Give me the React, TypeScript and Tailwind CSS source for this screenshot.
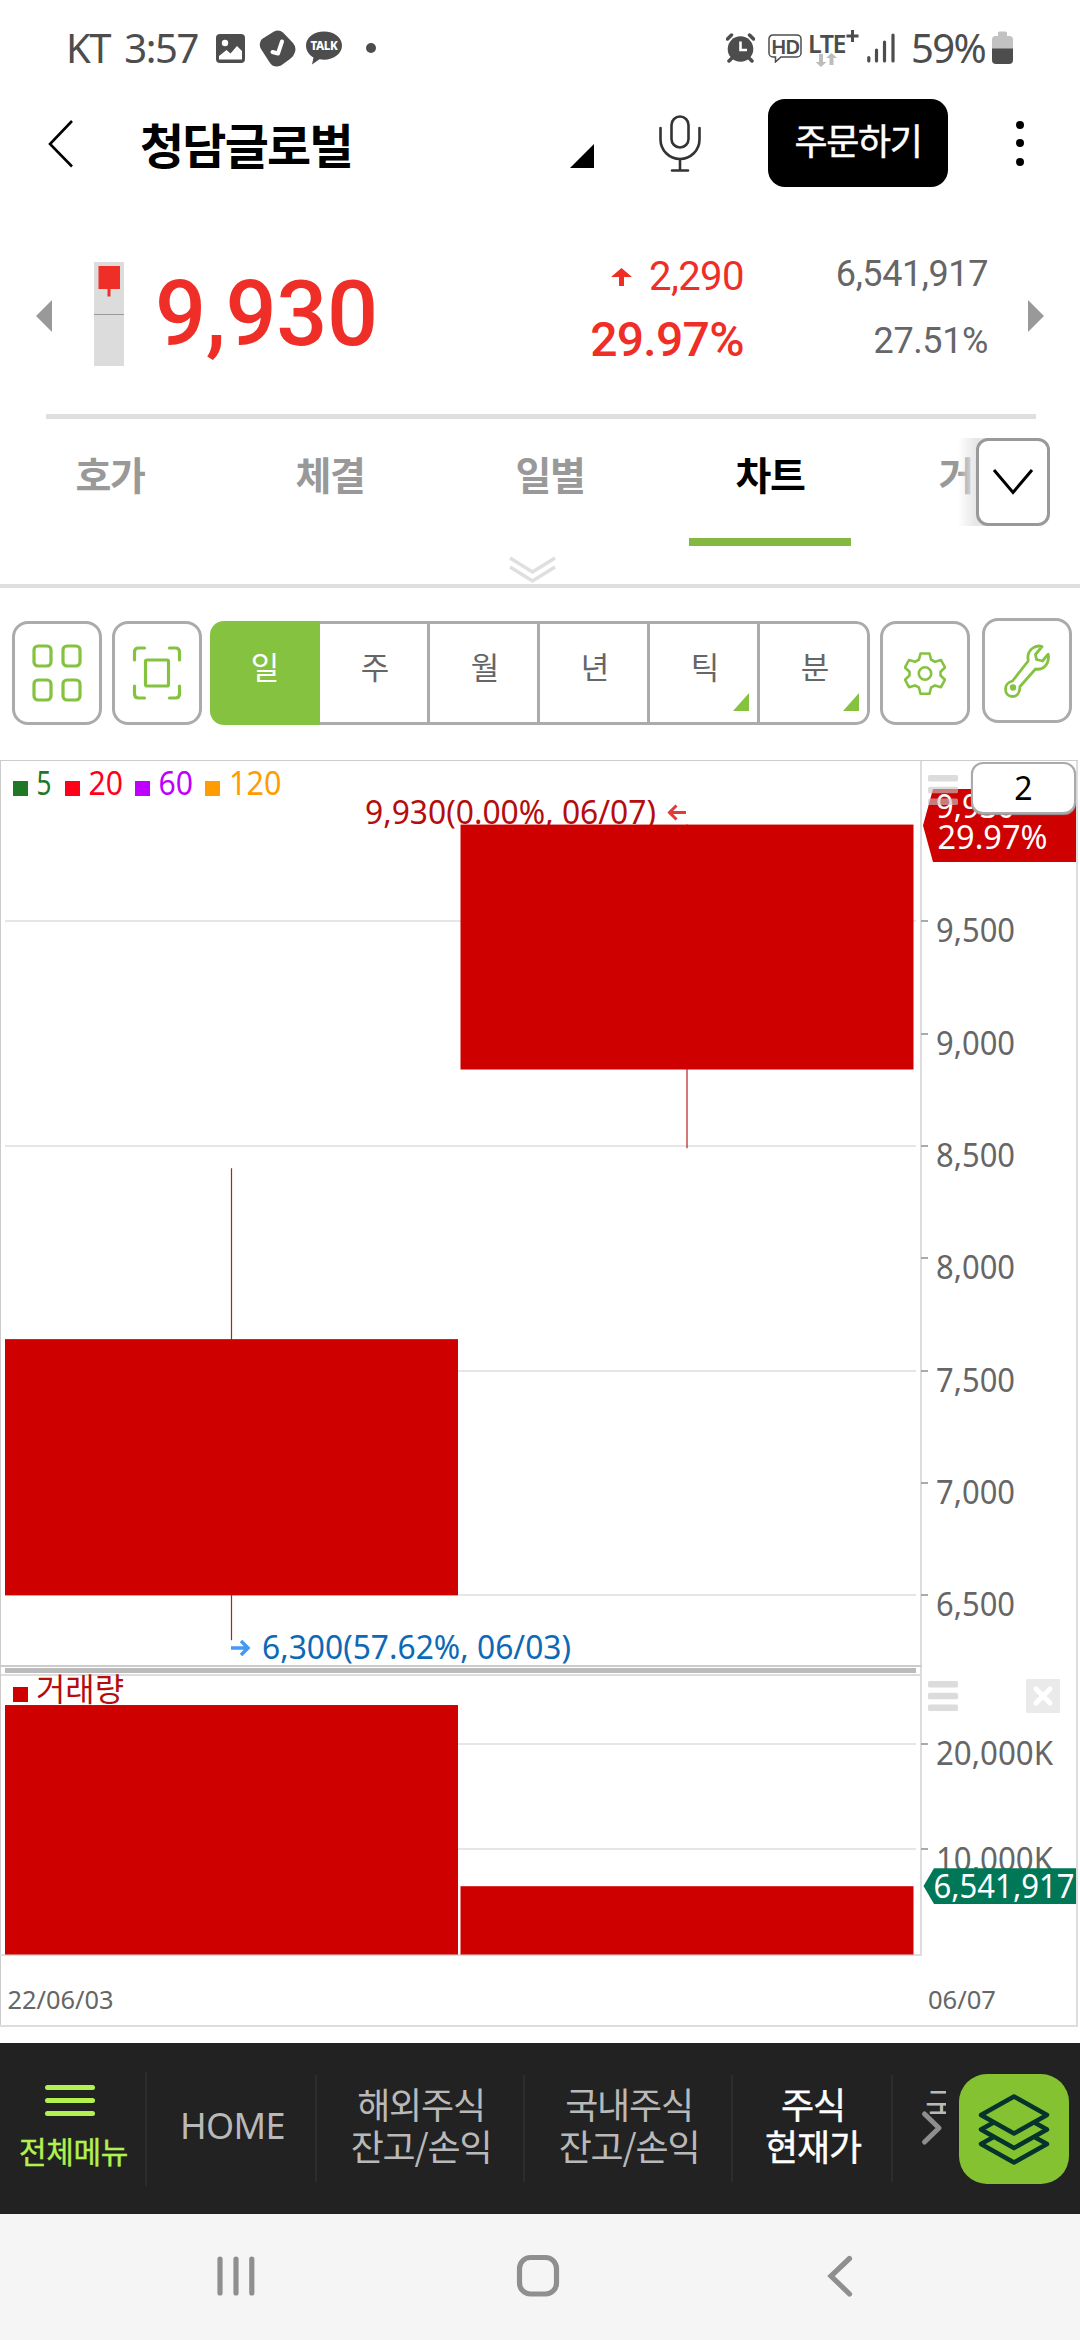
import { ReactNode } from 'react';
import { clsx } from 'clsx';

const FONT = "font-['Noto_Sans','Noto_Sans_CJK_KR',sans-serif]";
const KR = "font-['Noto_Sans_CJK_KR',sans-serif]";
const ROBOTO = "font-['Roboto',sans-serif]";

const tabs = ['호가', '체결', '일별', '차트', '거래원'];

const periods = [
  { label: '일', active: true },
  { label: '주' },
  { label: '월' },
  { label: '년' },
  { label: '틱', more: true },
  { label: '분', more: true },
];

// volume is in thousands
const candles = [
  { x: 5, width: 453, open: 6500, close: 7640, high: 8400, low: 6300, volume: 23690 },
  { x: 460.5, width: 453, open: 8840, close: 9930, high: 9930, low: 8490, volume: 6485 },
];

const movingAverages = [
  { label: '5', color: '#207724', x: 13, textX: 36.5, width: 15 },
  { label: '20', color: '#ff0018', x: 65, textX: 88.5, width: 34.5 },
  { label: '60', color: '#c000ff', x: 135, textX: 158.5, width: 34.5 },
  { label: '120', color: '#ff9d00', x: 205, textX: 229, width: 52.5 },
];

const priceTicks = [9500, 9000, 8500, 8000, 7500, 7000, 6500];
const volumeTicks = [
  { label: '20,000K', value: 20000 },
  { label: '10,000K', value: 10000 },
];

// chart coordinates, origin is the top left of the chart panel
const priceY = (price: number) => 835.3 - (price - 6500) * 0.2247;
const volumeY = (volume: number) => 1194.5 - volume * 0.01053;

const StatusBar = () => (
  <div className="flex h-[96px] items-center pl-[66px] pr-[67px] text-[40px] leading-none text-[#4d4d4d]">
    <span className="w-[148px] whitespace-nowrap tracking-[-1.4px] [word-spacing:5px]">KT 3:57</span>
    <svg className="ml-[2px]" width="29" height="29" viewBox="0 0 29 29">
      <rect width="29" height="29" rx="4" fill="#4d4d4d" />
      <circle cx="9" cy="9" r="3.2" fill="#fff" />
      <path d="M3 22l7.5-6 4 3.5 6.5-7.5 5 5v8.500H3z" fill="#fff" />
    </svg>
    <svg className="ml-[14px]" width="37" height="37" viewBox="0 0 37 37">
      <path d="M15 1.500Q20 -1 24 2.500L34 13Q37.500 17 36 22Q35 26 31 29L22 35.500Q15 38.500 11 33L2 19Q-1 13 3 9Z" fill="#4d4d4d" />
      <path d="M13.500 22l5.500 1.500 4-12" fill="none" stroke="#fff" strokeWidth="4" strokeLinecap="round" strokeLinejoin="round" />
    </svg>
    <div className="relative ml-[10px] h-[34px] w-[36px]">
      <svg width="36" height="34" viewBox="0 0 36 34">
        <path d="M18 0.500C8 .500 0 6.500 0 14.500c0 5 3 9.500 7.500 12L6 33.500l7.500-5.200c1.500.3 3 .4 4.500.4 10 0 18-6.200 18-14.200S28 .500 18 .500z" fill="#4d4d4d" />
      </svg>
      <span className="absolute left-0 top-[9px] w-[36px] text-center text-[11.5px] font-extrabold tracking-[-0.3px] text-white">TALK</span>
    </div>
    <i className="ml-[24px] size-[10px] rounded-full bg-[#4d4d4d]" />

    <svg className="ml-auto" width="29" height="30" viewBox="0 0 29 30">
      <circle cx="14.500" cy="16" r="12.800" fill="#4d4d4d" />
      <path d="M1.500 6l4-4M27.500 6l-4-4M3 28l3-3M26 28l-3-3" stroke="#4d4d4d" strokeWidth="3.500" strokeLinecap="round" />
      <path d="M14.500 8.500V17H21" fill="none" stroke="#fff" strokeWidth="2.600" />
    </svg>
    <div className="relative ml-[13px] h-[29px] w-[34px]">
      <svg width="34" height="29" viewBox="0 0 34 29">
        <path d="M5 .900h24a4 4 0 0 1 4 4v14a4 4 0 0 1-4 4H13l-5.500 5V23H5a4 4 0 0 1-4-4V5a4 4 0 0 1 4-4.100z" fill="none" stroke="#4d4d4d" strokeWidth="1.500" />
      </svg>
      <span className="absolute left-0 top-[1px] w-[34px] text-center text-[20.5px] font-semibold leading-[22px] tracking-[-1.2px]">HD</span>
    </div>
    <div className="relative ml-[6px] h-[38px] w-[52px]">
      <span className="absolute left-0 top-[4px] text-[25px] font-semibold leading-[20px] tracking-[-1.4px]">LTE</span>
      <svg className="absolute left-0 top-0" width="52" height="38" viewBox="0 0 52 38">
        <path d="M44.500 1v12M38.500 7h12" stroke="#4d4d4d" strokeWidth="3" />
        <path d="M11 25h4v8h3.500L13 38l-5.500-5H11zM21.500 36h4v-7H29l-5.500-5-5.500 5h3.500z" fill="#bdbdbd" />
      </svg>
    </div>
    <svg className="ml-[7px]" width="28" height="30" viewBox="0 0 28 30">
      <path d="M1.800 24.500v3.500M9.500 17v11M17.500 9v19M26 2v26" stroke="#4d4d4d" strokeWidth="3.200" strokeLinecap="round" />
    </svg>
    <span className="ml-[16px] w-[73px] whitespace-nowrap tracking-[-1.6px]">59%</span>
    <svg className="ml-[8px]" width="21" height="34" viewBox="0 0 21 34">
      <path d="M6 2q0-1.500 1.500-1.500h6q1.500 0 1.500 1.500v3h2.500q3.500 0 3.500 3.500V18H0V8.500Q0 5 3.500 5H6z" fill="#c2c2c2" />
      <path d="M0 17.500h21V29q0 4-4 4H4q-4 0-4-4z" fill="#4d4d4d" />
    </svg>
  </div>
);

const Header = () => (
  <header className="flex h-[94px] items-center pl-[48px]">
    <svg width="26" height="50" viewBox="0 0 26 50">
      <path d="M24 3L2 26l22 22.500" fill="none" stroke="#000" strokeWidth="2.600" />
    </svg>
    <h1 className={clsx(KR, 'ml-[66px] w-[430px] text-[48px] font-bold leading-[64px] tracking-[-1.8px]')}>청담글로벌</h1>
    <svg className="mt-[26px]" width="24" height="24" viewBox="0 0 24 24">
      <path d="M24 0v24H0z" />
    </svg>
    <svg className="ml-[65px]" width="42" height="57" viewBox="0 0 42 57">
      <g fill="none" stroke="#333" strokeWidth="2.600" strokeLinecap="round">
        <rect x="12.500" y="1.500" width="17" height="31" rx="8.500" />
        <path d="M1.500 13v11.500a19.500 19.500 0 0 0 39 0V13M21 44v11M13 55.500h16" />
      </g>
    </svg>
    <button className={clsx(KR, 'ml-[67px] h-[88px] w-[180px] rounded-[17px] bg-black pb-[8px] text-[36px] tracking-[-1.4px] text-white [-webkit-text-stroke:0.5px_white]')}>
      주문하기
    </button>
    <div className="ml-[68px] flex flex-col gap-[10.5px]">
      <i className="size-2 rounded-full bg-black" />
      <i className="size-2 rounded-full bg-black" />
      <i className="size-2 rounded-full bg-black" />
    </div>
  </header>
);

const Quote = () => (
  <section className={clsx(ROBOTO, 'flex h-[224px] items-center pl-[36px] pr-[36px] pt-[24px]')}>
    <svg className="mt-1" width="16" height="32" viewBox="0 0 16 32">
      <path d="M16 0v32L0 16z" fill="#999" />
    </svg>
    <svg className="ml-[42px]" width="30" height="104" viewBox="0 0 30 104">
      <rect width="30" height="104" fill="#dcdcdc" />
      <path d="M0 52.500h30" stroke="#999" />
      <rect x="4.500" y="4" width="21.500" height="23" fill="#ee2e27" />
      <path d="M15 26v8.500" stroke="#ee2e27" strokeWidth="3" />
    </svg>
    <strong className="ml-[31px] mt-[2px] w-[300px] text-[90px] font-medium leading-[110px] tracking-[-0.4px] text-[#ee2e27]">9,930</strong>
    <div className="mb-[12px] ml-auto mr-[92px] text-right text-[#ee2e27]">
      <p className="flex items-center justify-end text-[40px] leading-[64px] tracking-[-0.6px]">
        <svg className="mr-[17px]" width="21" height="18" viewBox="0 0 21 18">
          <path d="M10.500 0L21 9h-8v9H8V9H0z" fill="#ee2e27" />
        </svg>
        2,290
      </p>
      <p className="text-[48px] font-medium leading-[62px] tracking-[-0.7px]">29.97%</p>
    </div>
    <div className="mb-[13px] text-right text-[36px] leading-[67px] tracking-[-0.4px] text-[#666]">
      <p>6,541,917</p>
      <p>27.51%</p>
    </div>
    <svg className="ml-[40px] mt-1" width="16" height="32" viewBox="0 0 16 32">
      <path d="M0 0v32l16-16z" fill="#999" />
    </svg>
  </section>
);

const Tabs = () => (
  <nav className="relative h-[169px] overflow-hidden border-b-4 border-[#dfdfdf]">
    <div className={clsx(KR, 'flex w-[1100px] text-[39px] font-bold tracking-[-1.5px] text-[#999]')}>
      {tabs.map((tab) => (
        <div key={tab} className="flex h-[127px] w-[220px] shrink-0 flex-col items-center justify-between">
          <span className={clsx('pt-[26px] leading-[56px]', tab === '차트' && 'text-black')}>{tab}</span>
          {tab === '차트' && <i className="h-[8px] w-[162px] bg-[#85b840]" />}
        </div>
      ))}
    </div>
    <div className="absolute left-[958px] top-[19px] h-[88px] w-[122px] bg-linear-to-r from-white/0 to-[#e6e6e6] to-15%" />
    <div className="absolute left-[1010px] top-0 h-[140px] w-[70px] bg-white" />
    <button className="absolute left-[976px] top-[19px] flex h-[88px] w-[74px] items-center justify-center rounded-[12px] border-[3px] border-[#999] bg-white">
      <svg width="42" height="28" viewBox="0 0 42 28">
        <path d="M2 2l19 22.500L40 2" fill="none" stroke="#000" strokeWidth="3" />
      </svg>
    </button>
    <svg className="absolute left-[509px] top-[137px]" width="47" height="28" viewBox="0 0 47 28">
      <path d="M1 2l22.500 14L46 2M1 11l22.500 14L46 11" fill="none" stroke="#dfdfdf" strokeWidth="3.500" />
    </svg>
  </nav>
);

const ToolButton = ({ className, children }: { className?: string; children: ReactNode }) => (
  <button className={clsx('flex h-[104px] w-[90px] shrink-0 items-center justify-center rounded-[16px] border-[3px] border-[#ababab]', className)}>
    {children}
  </button>
);

const Toolbar = () => (
  <section className="flex h-[172px] items-start pl-[12px] pt-[33px]">
    <ToolButton>
      <svg width="50" height="58" viewBox="0 0 50 58" fill="none" stroke="#85c240" strokeWidth="3.200">
        <rect x="2" y="2" width="17" height="20" rx="4" />
        <rect x="31" y="2" width="17" height="20" rx="4" />
        <rect x="2" y="36" width="17" height="20" rx="4" />
        <rect x="31" y="36" width="17" height="20" rx="4" />
      </svg>
    </ToolButton>
    <ToolButton className="ml-[10px]">
      <svg width="50" height="54" viewBox="0 0 50 54" fill="none" stroke="#85c240" strokeWidth="3.200" strokeLinecap="round">
        <path d="M2.500 14V6q0-4 4-4h6M37.500 2h6q4 0 4 4v8M2.500 40v8q0 4 4 4h6M37.500 52h6q4 0 4-4v-8" />
        <rect x="13.500" y="14" width="23" height="26" rx="1.500" />
      </svg>
    </ToolButton>
    <div className={clsx(KR, 'ml-[8px] flex h-[104px] w-[660px] overflow-hidden rounded-[14px] text-[31px] text-[#666]')}>
      {periods.map(({ label, active, more }, i) => (
        <div
          key={label}
          className={clsx(
            'relative flex w-[110px] items-center justify-center pb-[14px]',
            active
              ? 'bg-[#85c240] text-white'
              : 'border-y-[3px] border-r-[3px] border-[#ababab] pl-[3px]',
            i === periods.length - 1 && 'rounded-r-[14px]',
          )}
        >
          {label}
          {more && (
            <svg className="absolute bottom-[11px] right-[8px]" width="16" height="18" viewBox="0 0 16 18">
              <path d="M16 0v18H0z" fill="#85c240" />
            </svg>
          )}
        </div>
      ))}
    </div>
    <ToolButton className="ml-[10px]">
      <svg width="42" height="43" viewBox="0 0 42 43" fill="none" stroke="#85c240" strokeWidth="2.600" strokeLinejoin="round">
        <path d="M16.500 1.500h9l1.500 6 4 2.300 6-1.800 4 7.500-4.500 4.200v3.800l4.500 4.200-4 7.500-6-1.800-4 2.300-1.500 6h-9l-1.500-6-4-2.300-6 1.800-4-7.500 4.500-4.200v-3.800L1 15.500 5 8l6 1.800 4-2.300z" />
        <circle cx="21" cy="21.500" r="6.200" />
      </svg>
    </ToolButton>
    <ToolButton className="-mt-[3px] ml-[12px] h-[105px]">
      <svg width="46" height="54" viewBox="0 0 46 54" fill="none" stroke="#85c240" strokeWidth="2.800" strokeLinejoin="round" strokeLinecap="round">
        <path d="M38 2.500C32 .500 25 5 24 11.500c-.3 2 .2 4 .2 5.500L8.500 37C4 38 1.500 41.500 1.500 45c0 4.500 3 7.500 7 7.500s7-3 7.300-8c0-1 0-1.500.2-2L31.500 25c8 1.500 13-5 13-12 0-1-.1-2-.4-2.800L38.500 17l-6-1.500-1-5z" />
        <circle cx="9" cy="43.500" r="1.800" fill="#85c240" />
      </svg>
    </ToolButton>
  </section>
);

interface LabelProps {
  x: number;
  y: number;
  width: number;
  size?: number;
  fill: string;
  children: string;
}

const Label = ({ x, y, width, size = 32, fill, children }: LabelProps) => (
  <text x={x} y={y} fontSize={size} fill={fill} textLength={width} lengthAdjust="spacingAndGlyphs">
    {children}
  </text>
);

const Bars = ({ y }: { y: number }) => (
  <g fill="#c8c8c8" opacity="0.62">
    <rect x="928" y={y} width="30" height="6.500" rx="1.500" />
    <rect x="928" y={y + 11.7} width="30" height="6.500" rx="1.500" />
    <rect x="928" y={y + 23.4} width="30" height="6.500" rx="1.500" />
  </g>
);

const Chart = () => (
  <section className="relative h-[1267px]">
    <svg width="1080" height="1267" viewBox="0 0 1080 1267">
      {/* grid */}
      {[9500, 8500, 7500, 6500].map((price) => (
        <path key={price} d={`M5 ${Math.round(priceY(price))}H916`} stroke="#e6e6e6" strokeWidth="2" />
      ))}
      {volumeTicks.map(({ value }) => (
        <path key={value} d={`M5 ${Math.round(volumeY(value))}H916`} stroke="#e6e6e6" strokeWidth="2" />
      ))}

      {/* frame */}
      <path d="M0 .500H1078M.500 0V1266" stroke="#ccc" />
      <path d="M1077 1V1267M0 1266H1078M921 1V1196M0 1195H922M1 915H922" stroke="#ddd" strokeWidth="2" fill="none" />
      <path d="M1 906H922" stroke="#ccc" strokeWidth="2" />
      <rect x="5" y="908" width="911" height="5" fill="#bbb" />

      <Label x={365} y={63.5} width={291} fill="#b50d0d">9,930(0.00%, 06/07)</Label>
      <path d="M686 52.500H669.500M676.500 45.500l-7 7 7 7" stroke="#e03a3a" strokeWidth="3" fill="none" />

      {/* price and volume bars */}
      {candles.map((c) => {
        const center = c.x + c.width / 2;
        return (
          <g key={c.x} fill="#ce0000">
            <path d={`M${center} ${priceY(c.high)}V${priceY(c.low)}`} stroke="#b32020" strokeWidth="1.200" />
            <rect x={c.x} y={priceY(c.close)} width={c.width} height={priceY(c.open) - priceY(c.close)} />
            <rect x={c.x} y={volumeY(c.volume)} width={c.width} height={volumeY(0) - volumeY(c.volume)} />
          </g>
        );
      })}

      <path d="M231 888h16.500M241 881l7 7-7 7" stroke="#4499f5" strokeWidth="3.500" fill="none" />
      <Label x={262} y={898.5} width={309} fill="#0d69b5">6,300(57.62%, 06/03)</Label>

      {movingAverages.map((ma) => (
        <g key={ma.label}>
          <rect x={ma.x} y="21" width="15" height="15" fill={ma.color} />
          <Label x={ma.textX} y={34.5} width={ma.width} fill={ma.color}>{ma.label}</Label>
        </g>
      ))}
      <rect x="13" y="927" width="15" height="15" fill="#ce0000" />
      <Label x={36} y={941} width={88} fill="#b50d0d">거래량</Label>

      {/* right axis */}
      {priceTicks.map((price) => (
        <g key={price}>
          <path d={`M921 ${Math.round(priceY(price))}h7`} stroke="#a3abb5" strokeWidth="2" />
          <Label x={936} y={priceY(price) + 21} width={79} fill="#666">{price.toLocaleString('en-US')}</Label>
        </g>
      ))}
      {volumeTicks.map(({ label, value }) => (
        <g key={value}>
          <path d={`M921 ${Math.round(volumeY(value))}h7`} stroke="#a3abb5" strokeWidth="2" />
          <Label x={936} y={volumeY(value) + 21.5} width={117} fill="#666">{label}</Label>
        </g>
      ))}

      <path d="M923 65.500L933 29H1076V102H933z" fill="#ce0000" />
      <Label x={936} y={58} width={79} fill="#fff">9,930</Label>
      <Label x={937.5} y={89} width={110} fill="#fff">29.97%</Label>
      <Bars y={15} />

      <path d="M923.500 1126L934 1108.300H1076V1144H934z" fill="#007757" />
      <Label x={933.5} y={1137.5} width={141} fill="#fff">6,541,917</Label>
      <Bars y={921} />
      <rect x="1026" y="919" width="34" height="34" fill="#eaeaea" />
      <path d="M1036 929l14 14M1050 929l-14 14" stroke="#fff" strokeWidth="5" strokeLinecap="round" />

      <Label x={7.500} y={1249} width={106} size={26} fill="#666">22/06/03</Label>
      <Label x={928} y={1249} width={68} size={26} fill="#666">06/07</Label>
    </svg>
    <div className="absolute left-[971px] top-[2px] flex h-[52px] w-[105px] items-center justify-center rounded-[12px] border-2 border-[#aaa] bg-white text-[32px] leading-none shadow-[0_1px_1px_#999]">
      2
    </div>
  </section>
);

const menu = [
  { lines: ['HOME'], width: 'w-[170px]', latin: true },
  { lines: ['해외주식', '잔고/손익'], width: 'w-[208px]' },
  { lines: ['국내주식', '잔고/손익'], width: 'w-[208px]' },
  { lines: ['주식', '현재가'], width: 'w-[160px]', active: true },
];

const BottomMenu = () => (
  <nav className={clsx(KR, 'relative mt-4 flex h-[171px] items-center bg-[#222] text-[36px] tracking-[-1.2px] text-[#b9b9b9]')}>
    <div className="flex h-[114px] w-[147px] flex-col items-center border-r-2 border-[#2c2c2c] pt-[13px] text-[#b2f14f]">
      <div className="ml-[45px] flex w-[50px] flex-col gap-2 self-start">
        <i className="h-[5px] rounded-full bg-[#b2f14f]" />
        <i className="h-[5px] rounded-full bg-[#b2f14f]" />
        <i className="h-[5px] rounded-full bg-[#b2f14f]" />
      </div>
      <span className="ml-[2px] mt-[12px] text-[30px] leading-[44px] tracking-[-0.4px] [-webkit-text-stroke:0.4px_#b2f14f]">전체메뉴</span>
    </div>
    {menu.map(({ lines, width, active, latin }) => (
      <div
        key={lines[0]}
        className={clsx(
          'flex h-[107px] flex-col items-center justify-center border-r-2 border-[#2c2c2c] leading-[42px]',
          width,
          active && 'text-white [-webkit-text-stroke:0.4px_white]',
          latin ? "pb-[5px] pl-[3px] font-['Noto_Sans',sans-serif] tracking-[-0.6px]" : 'pb-[10px] pl-[2px]',
        )}
      >
        {lines.map((line) => (
          <span key={line}>{line}</span>
        ))}
      </div>
    ))}
    <div className="-mt-[49px] ml-[32px] w-[21px] overflow-hidden whitespace-nowrap leading-[42px]">국내</div>
    <svg className="absolute left-[920px] top-[66px]" width="24" height="38" viewBox="0 0 24 38">
      <path d="M4.500 5L19 19 4.500 33" fill="none" stroke="#8e8e8e" strokeWidth="5" strokeLinecap="round" strokeLinejoin="round" />
    </svg>
    <button className="ml-[13px] flex h-[110px] w-[110px] shrink-0 items-center justify-center rounded-[28px] bg-[#85c232]">
      <svg width="72" height="72" viewBox="0 0 72 72" fill="none" stroke="#04342c" strokeWidth="4.500" strokeLinejoin="round">
        <path d="M36 3.500L69 22 36 40.500 3 22zM16.500 29L3 36.500 36 55l33-18.500L55.500 29M16.500 43.500L3 51l33 18.500L69 51l-13.500-7.500" />
      </svg>
    </button>
  </nav>
);

const SystemNav = () => (
  <div className="h-[126px] bg-[#f5f5f5]">
    <svg width="1080" height="126" viewBox="0 0 1080 126" fill="none" stroke="#8f8f8f" strokeWidth="5.200" strokeLinecap="round">
      <path d="M220 45v34M236 45v34M251.800 45v34" />
      <rect x="519.500" y="43.500" width="37" height="36.500" rx="11" />
      <path d="M849.500 44.500L831 62l18.500 18" />
    </svg>
  </div>
);

const App = () => {
  return (
    <main className={clsx(FONT, 'h-[2340px] w-[1080px] overflow-hidden bg-white text-black')}>
      <StatusBar />
      <Header />
      <Quote />
      <div className="ml-[46px] h-[5px] w-[990px] bg-[#dfdfdf]" />
      <Tabs />
      <Toolbar />
      <Chart />
      <BottomMenu />
      <SystemNav />
    </main>
  );
};

export default App;
